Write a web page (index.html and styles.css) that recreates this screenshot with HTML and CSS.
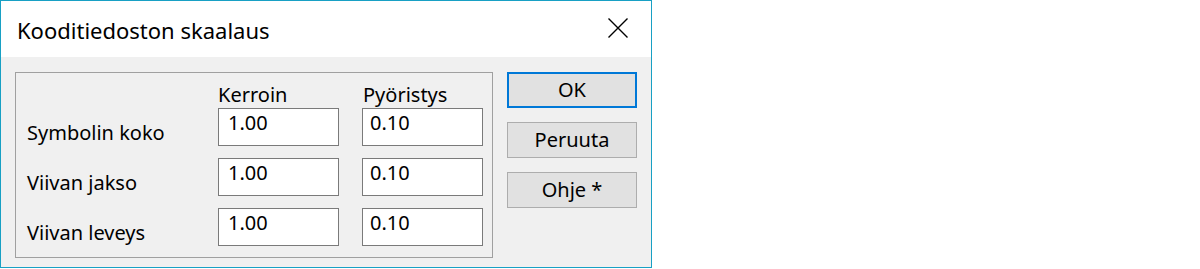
FILE: index.html
```html
<!DOCTYPE html>
<html lang="fi">
<head>
    <meta charset="UTF-8">
    <title>Kooditiedoston skaalaus</title>
    <link rel="stylesheet" href="styles.css">
</head>
<body>
    <div class="window">
        <div class="title-bar">
            <span class="title">Kooditiedoston skaalaus</span>
            <svg class="close" width="20" height="20" viewBox="0 0 20 20">
                <path d="M0.5 0.5 L19.5 19.5 M19.5 0.5 L0.5 19.5" stroke="#000" stroke-width="1.4" fill="none"/>
            </svg>
        </div>
        <div class="content">
            <div class="group">
                <div class="head">
                    <span></span>
                    <span>Kerroin</span>
                    <span>Pyöristys</span>
                </div>
                <div class="row">
                    <span class="label">Symbolin koko</span>
                    <input class="field first" type="text" value="1.00">
                    <input class="field" type="text" value="0.10">
                </div>
                <div class="row">
                    <span class="label">Viivan jakso</span>
                    <input class="field first" type="text" value="1.00">
                    <input class="field" type="text" value="0.10">
                </div>
                <div class="row">
                    <span class="label">Viivan leveys</span>
                    <input class="field first" type="text" value="1.00">
                    <input class="field" type="text" value="0.10">
                </div>
            </div>
            <div class="buttons">
                <button class="btn default">OK</button>
                <button class="btn">Peruuta</button>
                <button class="btn">Ohje *</button>
            </div>
        </div>
    </div>
</body>
</html>
```

FILE: styles.css
```css
body {
    margin: 0;
    background: #fff;
    font-family: "Noto Sans", "Open Sans", sans-serif;
    font-size: 20px;
    color: #000;
}

.window {
    width: 650px;
    height: 266px;
    border: 1px solid #18a0c4;
    display: flex;
    flex-direction: column;
}

.title-bar {
    height: 56px;
    background: #fff;
    display: flex;
    align-items: center;
    justify-content: space-between;
    padding: 0 23px 0 16px;
}

.title {
    font-size: 22px;
    line-height: 28px;
    padding-top: 2px;
}

.close {
    display: block;
    margin-top: -2px;
}

.content {
    flex: 1;
    background: #f0f0f0;
    display: flex;
    align-items: flex-start;
    gap: 14px;
    padding: 15px 14px 0 14px;
}

.group {
    width: 465px;
    height: 184px;
    border: 1px solid #a0a0a0;
    padding-left: 11px;
}

.head,
.row {
    display: grid;
    grid-template-columns: 168px 121px 121px;
    column-gap: 23px;
}

.head {
    padding-top: 10px;
    line-height: 24px;
    height: 24px;
    margin-bottom: 1px;
}

.head span:last-child {
    padding-left: 1px;
}

.row {
    height: 38px;
    margin-bottom: 12px;
}

.label {
    line-height: 24px;
    padding-top: 13px;
    white-space: nowrap;
}

.field {
    box-sizing: border-box;
    width: 121px;
    height: 38px;
    margin: 0;
    border: 1px solid #7a7a7a;
    background: #fff;
    font-family: inherit;
    font-size: 20px;
    line-height: 24px;
    color: #000;
    padding: 0 0 10px 7px;
    outline: none;
}

.field.first {
    padding-left: 9px;
}

.buttons {
    display: flex;
    flex-direction: column;
    gap: 14px;
}

.btn {
    box-sizing: border-box;
    width: 130px;
    height: 36px;
    margin: 0;
    padding: 0;
    border: 1px solid #adadad;
    background: #e1e1e1;
    font-family: inherit;
    font-size: 20px;
    line-height: 24px;
    color: #000;
}

.btn.default {
    border: 2px solid #0078d7;
}
```
